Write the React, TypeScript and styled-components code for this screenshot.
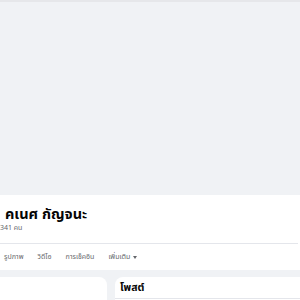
import React from 'react'
import styled, { createGlobalStyle } from 'styled-components'

const GlobalStyle = createGlobalStyle`
  html, body {
    margin: 0;
    padding: 0;
    background: #f0f2f5;
    font-family: "Noto Sans", "Noto Sans Thai", sans-serif;
    color: #050505;
    overflow: hidden;
  }
`

const Page = styled.div`
  width: 300px;
  height: 300px;
  overflow: hidden;
  border-top: 2px solid #e6e7ea;
  box-sizing: border-box;
`

const Header = styled.header`
  background: #fff;
`

const Cover = styled.div`
  height: 193px;
  background: #f0f2f5;
`

const Info = styled.div`
  padding: 9px 0 0 5px;
  height: 42px;
  box-sizing: border-box;
`

const Name = styled.h1`
  margin: 0;
  font-size: 14.5px;
  font-weight: 700;
  line-height: 19px;
`

const Friends = styled.div`
  margin: 0 0 0 -11px;
  font-size: 7px;
  line-height: 9px;
  color: #65676b;
`

const Divider = styled.div`
  height: 1px;
  margin: 6px 2px 0 0;
  background: #e4e6eb;
`

const Tabs = styled.nav`
  display: flex;
  align-items: center;
  gap: 14px;
  height: 26px;
  padding-left: 4px;
`

const Tab = styled.span`
  font-size: 7px;
  color: #65676b;
  display: flex;
  align-items: center;
  gap: 3px;
`

const Caret = styled.span`
  width: 0;
  height: 0;
  border-left: 2.5px solid transparent;
  border-right: 2.5px solid transparent;
  border-top: 3px solid #65676b;
`

const Content = styled.main`
  display: grid;
  grid-template-columns: 107px 1fr;
  gap: 8px;
  padding-top: 7px;
`

const Card = styled.section`
  background: #fff;
  border-radius: 0 8px 0 0;
  height: 60px;
  &:last-child {
    border-radius: 8px 0 0 0;
  }
`

const CardHead = styled.div`
  height: 21px;
  padding-left: 5px;
  display: flex;
  align-items: center;
  font-size: 10.5px;
  font-weight: 700;
  border-bottom: 1px solid #e4e6eb;
`

export default function App() {
  return (
    <>
      <GlobalStyle />
      <Page>
        <Header>
          <Cover />
          <Info>
            <Name>คเนศ กัญจนะ</Name>
            <Friends>2,341 คน</Friends>
          </Info>
          <Divider />
          <Tabs>
            <Tab>รูปภาพ</Tab>
            <Tab>วิดีโอ</Tab>
            <Tab>การเช็คอิน</Tab>
            <Tab>
              เพิ่มเติม <Caret />
            </Tab>
          </Tabs>
        </Header>
        <Content>
          <Card />
          <Card>
            <CardHead>โพสต์</CardHead>
          </Card>
        </Content>
      </Page>
    </>
  )
}
